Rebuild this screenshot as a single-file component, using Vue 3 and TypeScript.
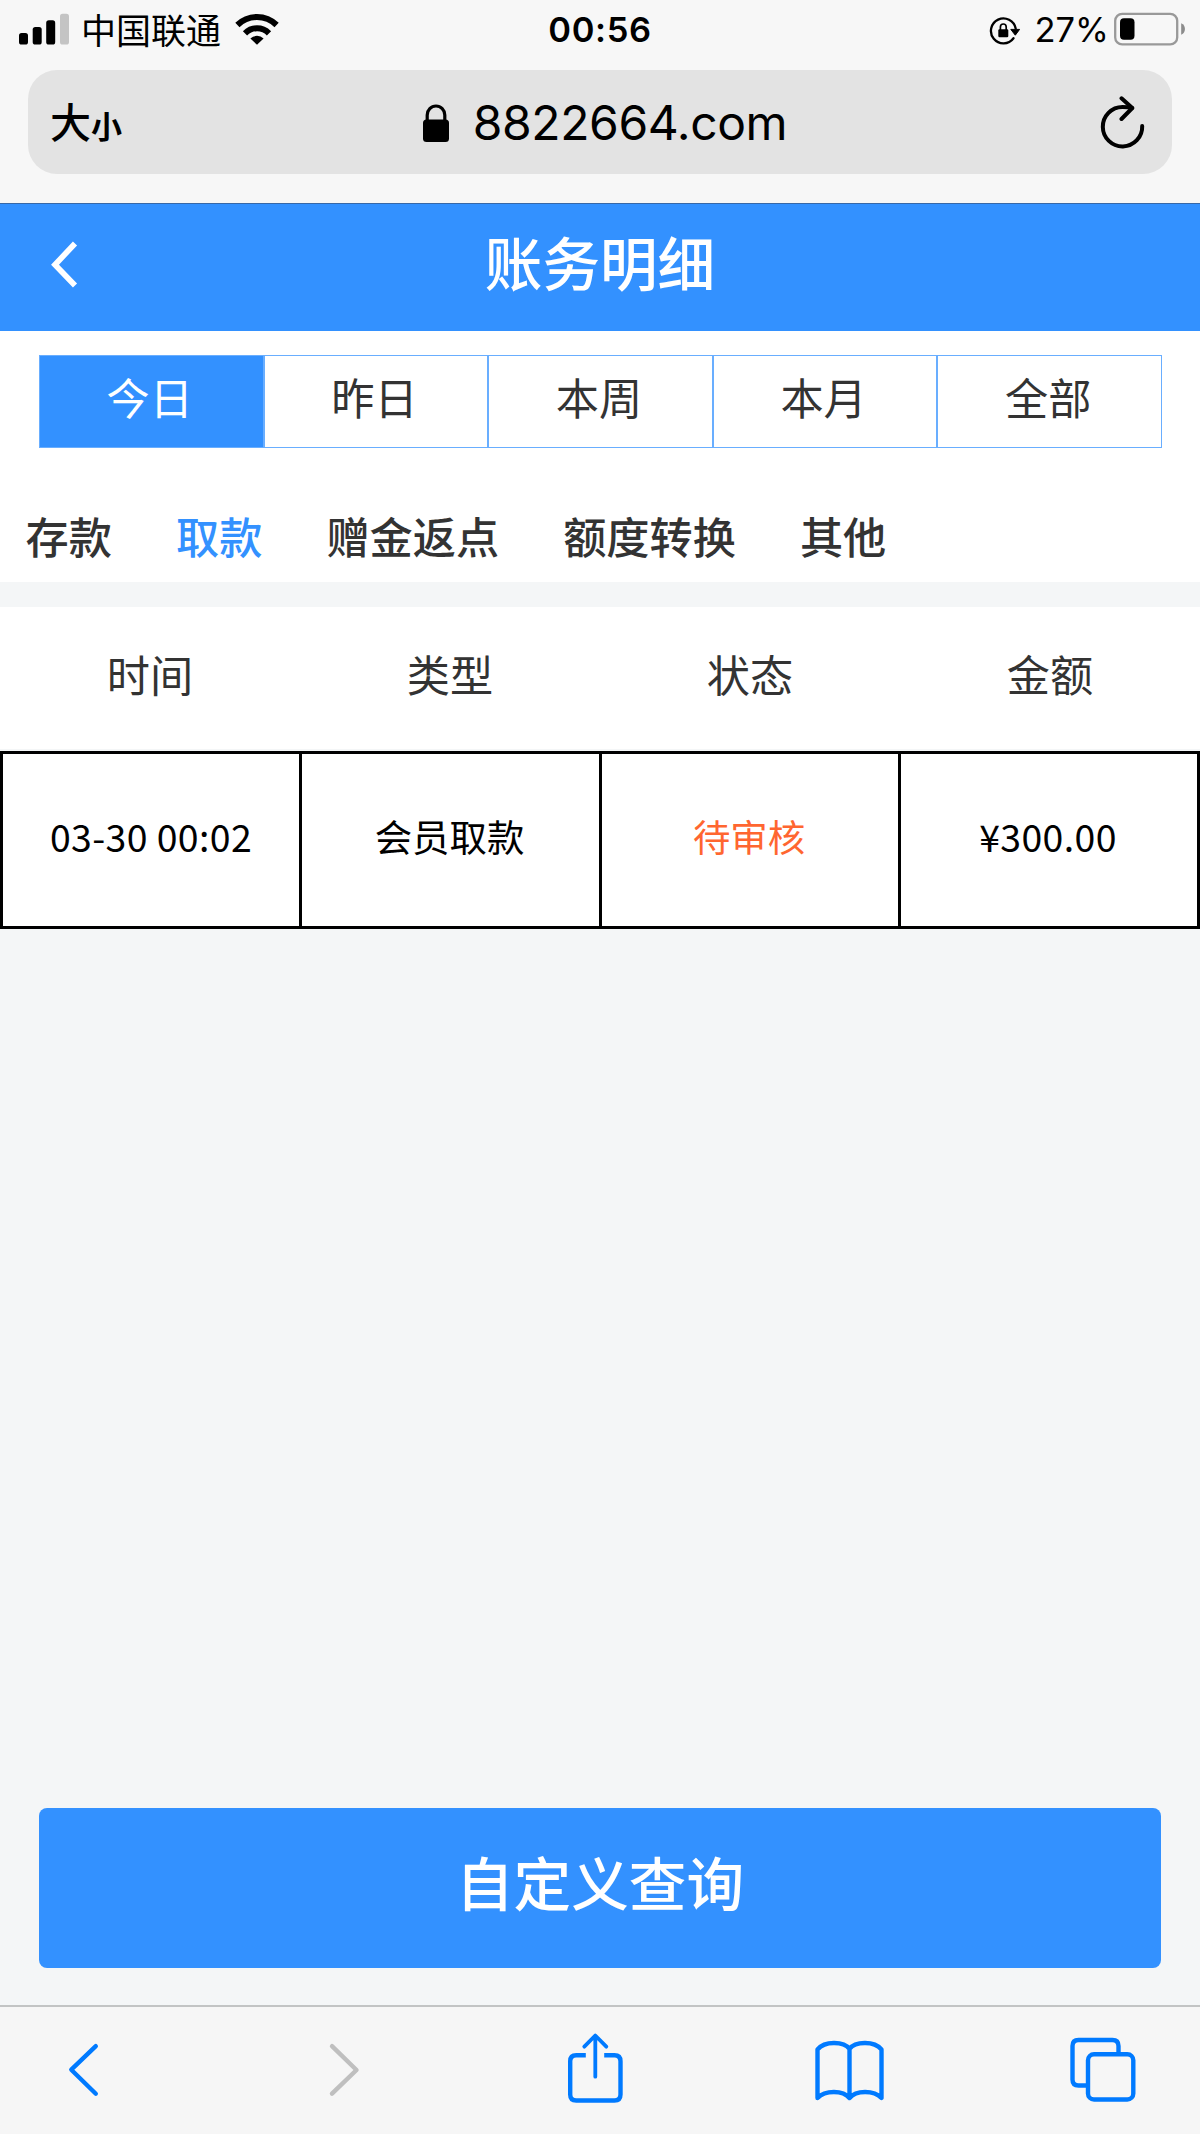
<script setup lang="ts">
import { ref } from 'vue'

interface RecordRow {
  time: string
  type: string
  status: string
  amount: string
}

const periods: string[] = ['今日', '昨日', '本周', '本月', '全部']
const categories: string[] = ['存款', '取款', '赠金返点', '额度转换', '其他']
const columns: string[] = ['时间', '类型', '状态', '金额']
const rows: RecordRow[] = [
  { time: '03-30 00:02', type: '会员取款', status: '待审核', amount: '¥300.00' },
]

const activePeriod = ref(0)
const activeCategory = ref(1)
</script>

<template>
  <div class="screen">
    <div class="chrome">
      <div class="status">
        <div class="status-left">
          <svg class="signal" width="50" height="32" viewBox="0 0 50 32">
            <rect x="0" y="20" width="9" height="11.5" rx="2.6" />
            <rect x="13.7" y="14" width="9" height="17.5" rx="2.6" />
            <rect x="27.2" y="7.3" width="9" height="24.2" rx="2.6" />
            <rect x="41" y="0.7" width="9" height="30.8" rx="2.6" fill="#c4c4c4" />
          </svg>
          <span class="carrier">中国联通</span>
          <svg class="wifi" width="44" height="32" viewBox="0 0 44 32">
            <path d="M2.4 12 A28 28 0 0 1 41.6 12" fill="none" stroke="#000" stroke-width="6" />
            <path d="M10 20.3 A17 17 0 0 1 34 20.3" fill="none" stroke="#000" stroke-width="6" />
            <path d="M22 31.8 L15.4 25.5 A9.6 9.6 0 0 1 28.6 25.5 Z" />
          </svg>
        </div>
        <span class="clock">00:56</span>
        <div class="status-right">
          <svg class="rotation" width="32" height="30" viewBox="0 0 32 30">
            <path d="M24.5 22.3 A12.5 12.5 0 1 1 26.7 12.5" fill="none" stroke="#000" stroke-width="2.3" stroke-linecap="round" />
            <path d="M21.8 13.4 H30.6 L26.3 19.2 Z" stroke="#000" stroke-linejoin="round" />
            <rect x="9.3" y="13.3" width="10" height="8" rx="1.2" />
            <path d="M11.4 14 V11 a2.9 3 0 0 1 5.8 0 V14" fill="none" stroke="#000" stroke-width="1.7" />
          </svg>
          <span class="percent">27%</span>
          <svg class="battery" width="72" height="34" viewBox="0 0 72 34">
            <rect x="1.2" y="1.8" width="62" height="30.6" rx="7" fill="none" stroke="#999" stroke-width="2.3" />
            <rect x="6" y="6.3" width="14.5" height="21.5" rx="4" />
            <path d="M67.2 11.3 c5 2 5 9.500 0 11.500 z" fill="#8c8c8c" />
          </svg>
        </div>
      </div>
      <div class="address">
        <div class="text-size"><span class="size-big">大</span><span class="size-small">小</span></div>
        <div class="url">
          <svg width="28" height="40" viewBox="0 0 28 40">
            <rect x="1" y="16.5" width="26" height="22.5" rx="3.5" />
            <path d="M5.200 18 V12 a8.800 9 0 0 1 17.600 0 V18" fill="none" stroke="#000" stroke-width="3.200" />
          </svg>
          <span>8822664.com</span>
        </div>
        <svg class="reload" width="46" height="54" viewBox="0 0 46 54" fill="none" stroke="#000" stroke-width="4" stroke-linecap="round" stroke-linejoin="round">
          <path d="M42.2 30 A19.700 19.700 0 1 1 22.500 11 Q28 11 32 12" />
          <path d="M21.500 2.300 L32.300 12 L21.500 23" />
        </svg>
      </div>
    </div>

    <header class="header">
      <svg class="back" width="28" height="54" viewBox="0 0 28 54">
        <path d="M24 4.500 L4 25.700 L24 46.500" fill="none" stroke="#fff" stroke-width="5.700" />
      </svg>
      <h1>账务明细</h1>
    </header>

    <section class="filters">
      <div class="periods">
        <button
          v-for="(period, i) in periods"
          :key="period"
          :class="{ active: i === activePeriod }"
          @click="activePeriod = i"
        >{{ period }}</button>
      </div>
      <nav class="categories">
        <a
          v-for="(category, i) in categories"
          :key="category"
          :class="{ active: i === activeCategory }"
          @click="activeCategory = i"
        >{{ category }}</a>
      </nav>
    </section>

    <section class="records">
      <div class="records-head">
        <span v-for="column in columns" :key="column">{{ column }}</span>
      </div>
      <div v-for="row in rows" :key="row.time" class="record">
        <span class="figure">{{ row.time }}</span>
        <span>{{ row.type }}</span>
        <span class="pending">{{ row.status }}</span>
        <span class="figure">{{ row.amount }}</span>
      </div>
    </section>

    <div class="action">
      <button>自定义查询</button>
    </div>

    <footer class="toolbar">
      <svg width="80" height="127" viewBox="0 0 80 127">
        <path d="M52.800 39.200 L28.300 62.700 L52.800 86.700" />
      </svg>
      <svg class="disabled" width="80" height="127" viewBox="0 0 80 127">
        <path d="M34 39.200 L58.500 63 L34 86.700" />
      </svg>
      <svg width="80" height="127" viewBox="0 0 80 127">
        <path d="M32.800 48.300 H23.200 Q17.200 48.300 17.200 54.300 V87.500 Q17.200 93.500 23.200 93.500 H61.500 Q67.500 93.500 67.500 87.500 V54.300 Q67.500 48.300 61.500 48.300 H51.200" stroke-linecap="butt" />
        <path d="M42.300 69.700 V29 M31.300 39.700 L42.300 28.500 L53.300 39.700" stroke-width="3.800" />
      </svg>
      <svg width="80" height="127" viewBox="0 0 80 127">
        <path d="M41.500 42 C36 34.500 17 33.500 9.500 42.500 V91 C17 83 35 83 41.500 91 C48 83 66 83 73.500 91 V42.500 C66 33.500 47 34.500 41.500 42 V91" />
      </svg>
      <svg width="80" height="127" viewBox="0 0 80 127">
        <path d="M24 78.500 H15.500 Q9.500 78.500 9.500 72.500 V39 Q9.500 33 15.500 33 H49.500 Q55.500 33 55.500 39 V47" stroke-linecap="butt" />
        <rect x="25" y="47.200" width="45.300" height="45.300" rx="6" />
      </svg>
    </footer>
  </div>
</template>

<style>
body {
  margin: 0;
}
</style>

<style scoped>
.screen {
  display: flex;
  flex-direction: column;
  width: 1200px;
  height: 2134px;
  background: #f4f6f7;
  color: #333;
  font-family: "Noto Sans CJK SC", sans-serif;
}

button {
  box-sizing: border-box;
  margin: 0;
  padding: 0;
  border: 0;
  background: none;
  color: inherit;
  font-family: inherit;
}

.chrome {
  box-sizing: border-box;
  height: 203px;
  background: #f7f7f7;
  color: #000;
}

.status {
  display: grid;
  grid-template-columns: 1fr auto 1fr;
  align-items: center;
  height: 70px;
  padding: 0 14px 0 19px;
  box-sizing: border-box;
}

.status-left,
.status-right {
  display: flex;
  align-items: center;
  height: 58px;
  align-self: start;
}

.status-right {
  justify-content: flex-end;
}

.carrier {
  margin-left: 12px;
  font-size: 35px;
  font-weight: 400;
  line-height: 58px;
  white-space: nowrap;
}

.wifi {
  margin-left: 14px;
}

.clock {
  align-self: start;
  height: 60px;
  margin-right: 5px;
  font: 600 34.500px/60px Inter, sans-serif;
  letter-spacing: 0.600px;
}

.rotation {
  margin-top: 3px;
}

.percent {
  margin: 2px 5px 0 14px;
  font: 400 34.500px/58px Inter, sans-serif;
}

.address {
  display: grid;
  grid-template-columns: 1fr auto 1fr;
  align-items: center;
  box-sizing: border-box;
  height: 104px;
  margin: 0 28px;
  padding: 0 26px 0 22px;
  border-radius: 29px;
  background: #e3e3e3;
}

.text-size {
  display: flex;
  align-items: baseline;
  font-weight: 500;
  line-height: 60px;
}

.size-big {
  font-size: 41px;
}

.size-small {
  font-size: 31px;
  font-weight: 700;
}

.url {
  display: flex;
  align-items: center;
  gap: 23px;
  margin-left: 13px;
  font: 400 48px/105px Inter, sans-serif;
  letter-spacing: -0.400px;
}

.reload {
  justify-self: end;
}

.header {
  display: grid;
  grid-template-columns: 1fr auto 1fr;
  align-items: start;
  box-sizing: border-box;
  height: 127.500px;
  padding: 0 50px;
  border-top: 1px solid #3768a8;
  background: #3391ff;
  color: #fff;
}

.back {
  margin: 35px 0 0 1px;
}

h1 {
  margin: 0;
  font-size: 57.600px;
  font-weight: 500;
  line-height: 114px;
}

.filters {
  height: 251px;
  box-sizing: border-box;
  padding-top: 24px;
  background: #fff;
}

.periods {
  display: flex;
  box-sizing: border-box;
  height: 93px;
  margin: 0 38px 0 39px;
  border: 1.500px solid #69aeff;
}

.periods button {
  flex: 1;
  padding: 0 3px 10px 0;
  font-size: 43.200px;
  font-weight: 400;
  line-height: 60px;
  border-left: 2px solid #69aeff;
}

.periods button:first-child {
  border-left: 0;
}

.periods .active {
  background: #3391ff;
  color: #fff;
}

.categories {
  display: flex;
  gap: 64px;
  padding: 47px 0 0 25.600px;
  font-size: 43.200px;
  font-weight: 500;
  line-height: 80px;
}

.categories .active {
  color: #3391ff;
}

.records {
  margin-top: 25px;
  background: #fff;
}

.records-head {
  display: grid;
  grid-template-columns: repeat(4, 1fr);
  height: 142.500px;
  border-bottom: 2px solid #f4f6f7;
  font-size: 43.200px;
  font-weight: 400;
  line-height: 132px;
  text-align: center;
}

.record {
  display: grid;
  grid-template-columns: 296px 300px 299px 1fr;
  box-sizing: border-box;
  height: 178px;
  border: 3px solid #000;
  color: #000;
  font-size: 37.400px;
  font-weight: 400;
  line-height: 164px;
  text-align: center;
}

.record span + span {
  border-left: 3px solid #000;
  padding-right: 2px;
}

.record .figure {
  letter-spacing: 0.400px;
}

.record .pending {
  color: #ff6630;
}

.action {
  display: flex;
  margin-top: auto;
  padding: 0 39px 37px;
}

.action button {
  flex: 1;
  height: 160px;
  padding-bottom: 15px;
  border-radius: 8px;
  background: #3391ff;
  color: #fff;
  font-size: 57.600px;
  font-weight: 500;
  line-height: 90px;
}

.toolbar {
  display: flex;
  justify-content: space-between;
  padding: 0 57px 0 43px;
  border-top: 2px solid #c2c4c4;
  background: #f6f6f6;
  fill: none;
  stroke: #007aff;
  stroke-width: 4.400px;
  stroke-linecap: round;
  stroke-linejoin: round;
}

.toolbar .disabled {
  stroke: #bfbfbf;
}
</style>
